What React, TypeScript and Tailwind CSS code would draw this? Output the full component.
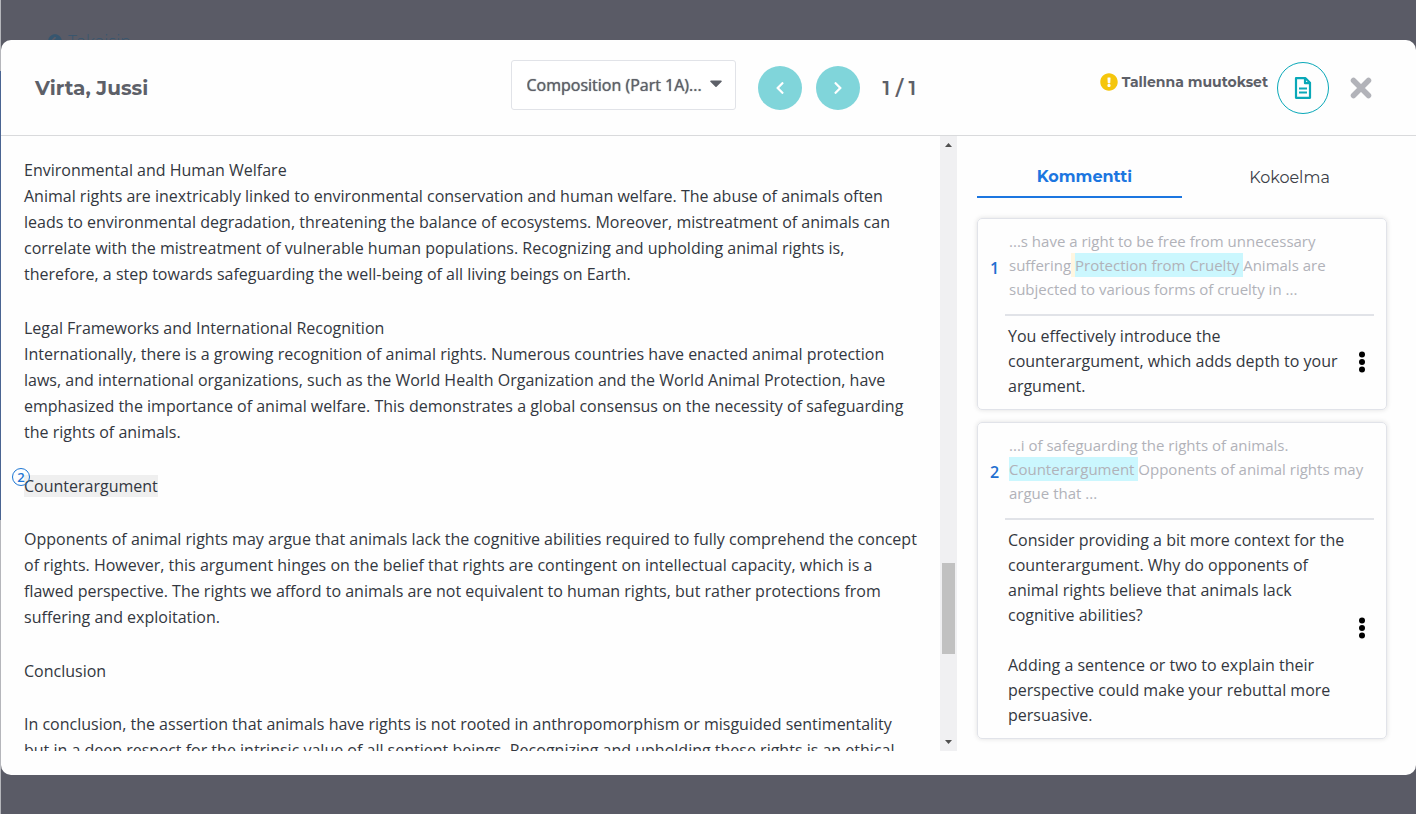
import { FaChevronLeft, FaChevronRight, FaCaretDown, FaExclamationCircle, FaArrowCircleLeft } from 'react-icons/fa';

const comments = [
  {
    id: 1,
    before: '...s have a right to be free from unnecessary suffering',
    marked: 'Protection from Cruelty ',
    after: 'Animals are subjected to various forms of cruelty in ...',
    spacer: true,
    body: ['You effectively introduce the counterargument, which adds depth to your argument.'],
  },
  {
    id: 2,
    before: '...i of safeguarding the rights of animals. ',
    marked: 'Counterargument ',
    after: 'Opponents of animal rights may argue that ...',
    spacer: false,
    body: [
      'Consider providing a bit more context for the counterargument. Why do opponents of animal rights believe that animals lack cognitive abilities?',
      'Adding a sentence or two to explain their perspective could make your rebuttal more persuasive.',
    ],
  },
];

function DocumentIcon() {
  return (
    <svg width="18" height="22" viewBox="0 0 18 22" fill="none" stroke="currentColor" strokeWidth="2.2" strokeLinejoin="round">
      <path d="M2 1.2h9.5l4.5 4.5v15.1H2z" />
      <path d="M11 1.2v5h5" />
      <path d="M5 11.5h8M5 15.5h8" strokeWidth="2" />
    </svg>
  );
}

function CloseIcon() {
  return (
    <svg width="22" height="22" viewBox="0 0 22 22" stroke="currentColor" strokeWidth="5.5" strokeLinecap="round">
      <path d="M3.5 3.5l15 15M18.5 3.5l-15 15" />
    </svg>
  );
}

function KebabIcon() {
  return (
    <svg width="6" height="22" viewBox="0 0 6 22" fill="currentColor">
      <circle cx="3" cy="3.6" r="3" />
      <circle cx="3" cy="11" r="3" />
      <circle cx="3" cy="18.4" r="3" />
    </svg>
  );
}

function Header() {
  return (
    <header className="grid h-24 shrink-0 grid-cols-[1fr_auto_1fr] items-center border-b border-[#d9dadc] pl-[34px] pr-11 font-['Montserrat','Inter',sans-serif] text-[#5d6068]">
      <h1 className="text-xl font-bold">Virta, Jussi</h1>

      <div className="flex items-center pl-[21px]">
        <div className="relative mb-[6px] w-[225px]">
          <select
            aria-label="Tehtävä"
            className="h-[50px] w-full appearance-none rounded-[3px] border border-[#e1e3e8] bg-white pl-[15px] pr-8 font-['Open_Sans',sans-serif] text-base font-medium [text-shadow:0_0_1px_#5d6068]"
          >
            <option>Composition (Part 1A)...</option>
          </select>
          <FaCaretDown className="pointer-events-none absolute right-3 top-[13px] h-5 w-4" />
        </div>
        <button aria-label="Edellinen" className="ml-[22px] flex size-11 items-center justify-center rounded-full bg-[#80d5da] text-white">
          <FaChevronLeft className="size-[14px]" />
        </button>
        <button aria-label="Seuraava" className="ml-[14px] flex size-11 items-center justify-center rounded-full bg-[#80d5da] text-white">
          <FaChevronRight className="size-[14px]" />
        </button>
        <span className="ml-[23px] w-[35px] whitespace-nowrap text-xl font-semibold">1 / 1</span>
      </div>

      <div className="flex items-center justify-end">
        <p className="mb-3 flex items-center gap-1 whitespace-nowrap text-sm font-bold">
          <FaExclamationCircle className="size-[18px] text-[#f5c60c]" />
          Tallenna muutokset
        </p>
        <button aria-label="Asiakirja" className="ml-[9px] flex size-[52px] items-center justify-center rounded-full border border-[#09a8b8] text-[#09a8b8]">
          <DocumentIcon />
        </button>
        <button aria-label="Sulje" className="ml-[21px] text-[#b2b3b9]">
          <CloseIcon />
        </button>
      </div>
    </header>
  );
}

function Essay() {
  return (
    <article className="flex min-w-0 flex-1 flex-col gap-7 overflow-hidden pl-[23px] pr-5 pt-[21px] text-base leading-[26px] text-[#333740]">
      <section>
        <h2>Environmental and Human Welfare</h2>
        <p>
          Animal rights are inextricably linked to environmental conservation and human welfare. The abuse of animals
          often leads to environmental degradation, threatening the balance of ecosystems. Moreover, mistreatment of
          animals can correlate with the mistreatment of vulnerable human populations. Recognizing and upholding animal
          rights is, therefore, a step towards safeguarding the well-being of all living beings on Earth.
        </p>
      </section>
      <section>
        <h2>Legal Frameworks and International Recognition</h2>
        <p>
          Internationally, there is a growing recognition of animal rights. Numerous countries have enacted animal
          protection laws, and international organizations, such as the World Health Organization and the World Animal
          Protection, have emphasized the importance of animal welfare. This demonstrates a global consensus on the
          necessity of safeguarding the rights of animals.
        </p>
      </section>
      <section className="flex flex-col gap-[27px]">
        <h2>
          <span className="relative bg-[#efefef]">
            Counterargument
            <span className="absolute -left-3 -top-[7px] flex size-[18px] items-center justify-center rounded-full border border-[#1c76d4] text-[13px] font-semibold leading-4 text-[#1c76d4]">
              2
            </span>
          </span>
        </h2>
        <p>
          Opponents of animal rights may argue that animals lack the cognitive abilities required to fully comprehend
          the concept of rights. However, this argument hinges on the belief that rights are contingent on intellectual
          capacity, which is a flawed perspective. The rights we afford to animals are not equivalent to human rights,
          but rather protections from suffering and exploitation.
        </p>
      </section>
      <section className="flex flex-col gap-[27px]">
        <h2>Conclusion</h2>
        <p>
          In conclusion, the assertion that animals have rights is not rooted in anthropomorphism or misguided
          sentimentality but in a deep respect for the intrinsic value of all sentient beings. Recognizing and upholding
          these rights is an ethical
        </p>
      </section>
    </article>
  );
}

function Scrollbar() {
  return (
    <div aria-hidden="true" className="flex w-[17px] shrink-0 flex-col items-center bg-[#f0f0f2] text-[#505050]">
      <svg width="17" height="17" viewBox="0 0 17 17" fill="currentColor">
        <path d="M5 11l3.5-4 3.5 4z" />
      </svg>
      <div className="grow-[41]" />
      <div className="h-[91px] w-[13px] bg-[#c1c1c1]" />
      <div className="grow-[8]" />
      <svg width="17" height="17" viewBox="0 0 17 17" fill="currentColor">
        <path d="M5 6l3.5 4L12 6z" />
      </svg>
    </div>
  );
}

function CommentCard({ comment }: { comment: (typeof comments)[number] }) {
  return (
    <li className="rounded-[5px] border border-[#e1e3e9] py-[10px] pl-3 pr-3 shadow-[0_0_5px_rgba(0,0,0,0.12)]">
      <div className="flex items-center text-[15px] leading-6 text-[#b1b2b9]">
        <span className="w-[19px] shrink-0 pt-[5px] text-base font-semibold text-[#1f6fd0]">{comment.id}</span>
        <blockquote className="min-w-0 flex-1">
          {comment.before}
          {comment.spacer && <span className="bg-[#fff6e0] py-[2px]"> </span>}
          <mark className="bg-[#cbf7fe] py-[2px] text-inherit">{comment.marked}</mark>
          {comment.after}
        </blockquote>
      </div>
      <hr className="ml-[15px] mt-[13px] border-t-2 border-[#e1e3e8]" />
      <div className="flex items-center justify-between pl-[18px] pr-[9px] pt-2 text-base leading-[25px] text-[#333740]">
        <div className="flex flex-1 flex-col gap-[25px] pr-2">
          {comment.body.map((text) => (
            <p key={text}>{text}</p>
          ))}
        </div>
        <button aria-label="Lisää toimintoja" className="text-black">
          <KebabIcon />
        </button>
      </div>
    </li>
  );
}

function Sidebar() {
  return (
    <aside className="ml-5 mr-[29px] flex w-[410px] shrink-0 flex-col">
      <div role="tablist" className="grid grid-cols-2 font-['Montserrat','Inter',sans-serif] text-base">
        <button role="tab" aria-selected="true" className="h-[62px] border-b-2 border-[#1c76e0] pl-[10px] pt-[22px] font-bold leading-6 text-[#1c76e0]">
          Kommentti
        </button>
        <button role="tab" aria-selected="false" className="h-[62px] pl-[10px] pt-[22px] leading-6 text-[#3c3f48]">
          Kokoelma
        </button>
      </div>
      <ul className="mt-5 flex flex-col gap-3">
        {comments.map((comment) => (
          <CommentCard key={comment.id} comment={comment} />
        ))}
      </ul>
    </aside>
  );
}

export default function App() {
  return (
    <div className="flex h-screen bg-[#5a5b66] font-['Open_Sans',sans-serif]">
      {/* sliver of the page behind the dialog */}
      <div className="flex w-px shrink-0 flex-col bg-[#b5b6bb]">
        <div className="grow-[71]" />
        <div className="grow-[449] bg-[#4a6492]" />
        <div className="grow-[294]" />
      </div>
      <div className="relative flex min-w-0 flex-1 flex-col pb-[39px]">
        <div className="flex h-10 shrink-0 items-start gap-[6px] overflow-hidden pl-[47px] pt-[34px] font-['Montserrat','Inter',sans-serif] text-base leading-4 text-[#36566f]">
          <FaArrowCircleLeft className="size-[14px] shrink-0" />
          <a href="#" className="font-light">Takaisin</a>
        </div>
        <div role="dialog" aria-modal="true" className="flex min-h-0 flex-1 flex-col overflow-hidden rounded-[10px] bg-[#fefefe]">
          <Header />
          <div className="flex min-h-0 flex-1 pb-6">
            <Essay />
            <Scrollbar />
            <Sidebar />
          </div>
        </div>
      </div>
    </div>
  );
}
